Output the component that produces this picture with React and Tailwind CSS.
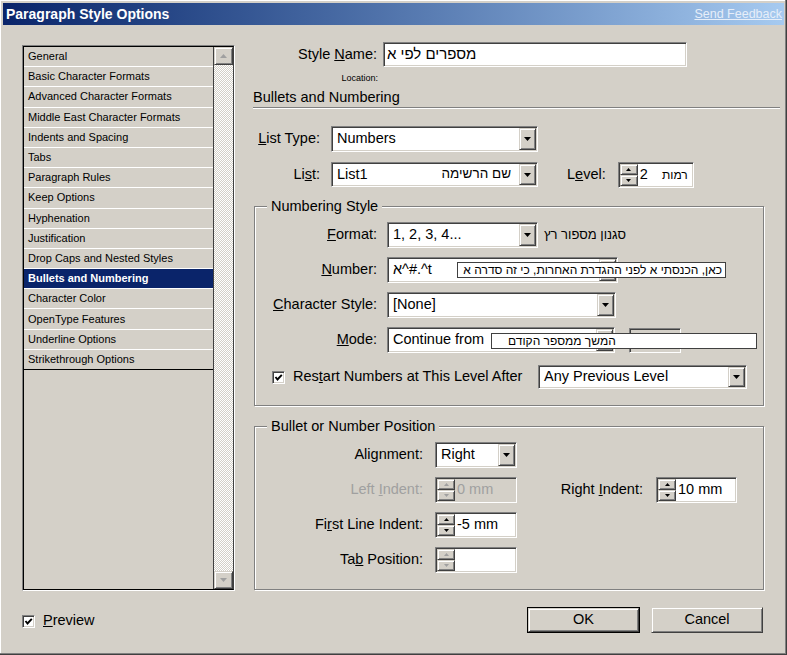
import React from "react";

const sunken =
  "border border-t-[#808080] border-l-[#808080] border-r-white border-b-white shadow-[inset_1px_1px_0_#404040,inset_-1px_-1px_0_#d4d0c8]";
const raised =
  "bg-[#d4d0c8] border border-t-[#d4d0c8] border-l-[#d4d0c8] border-r-[#404040] border-b-[#404040] shadow-[inset_1px_1px_0_#fff,inset_-1px_-1px_0_#808080]";

function DownTri({ color = "#000" }) {
  return (
    <svg width="7" height="4" viewBox="0 0 7 4">
      <polygon points="0,0 7,0 3.5,4" fill={color} />
    </svg>
  );
}

function SmallTri({ up, color }) {
  return (
    <svg width="5" height="3" viewBox="0 0 5 3">
      <polygon points={up ? "0,3 5,3 2.5,0" : "0,0 5,0 2.5,3"} fill={color} />
    </svg>
  );
}

function Dropdown({ className, children }) {
  return (
    <div className={`flex items-stretch bg-white ${sunken} ${className}`}>
      <div className="flex-1 flex items-center pl-[5px] min-w-0 whitespace-nowrap overflow-hidden">
        {children}
      </div>
      <div className={`w-[17px] my-[1px] mr-[1px] flex items-center justify-center ${raised}`}>
        <DownTri />
      </div>
    </div>
  );
}

function Spinner({ className, value, disabled, greyArrows, extra }) {
  const arrow = disabled || greyArrows ? "#a0a0a0" : "#000";
  return (
    <div
      className={`flex items-stretch ${disabled ? "bg-[#d4d0c8]" : "bg-white"} ${sunken} ${className}`}
    >
      <div className="w-[18px] my-[1px] ml-[1px] flex flex-col">
        <div className={`flex-1 flex items-center justify-center ${raised}`}>
          <SmallTri up color={arrow} />
        </div>
        <div className={`flex-1 flex items-center justify-center ${raised}`}>
          <SmallTri color={arrow} />
        </div>
      </div>
      <div
        className={`flex-1 flex items-center pl-[2px] whitespace-nowrap ${
          disabled ? "text-[#a0a0a0]" : "text-black"
        }`}
      >
        {value}
        {extra}
      </div>
    </div>
  );
}

function Checkbox() {
  return (
    <div className={`w-[13px] h-[13px] bg-white flex items-center justify-center ${sunken}`}>
      <svg width="9" height="9" viewBox="0 0 9 9">
        <polyline points="1.5,4 3.5,6.5 7.8,1.8" fill="none" stroke="#000" strokeWidth="1.9" />
      </svg>
    </div>
  );
}

const items = [
  "General",
  "Basic Character Formats",
  "Advanced Character Formats",
  "Middle East Character Formats",
  "Indents and Spacing",
  "Tabs",
  "Paragraph Rules",
  "Keep Options",
  "Hyphenation",
  "Justification",
  "Drop Caps and Nested Styles",
  "Bullets and Numbering",
  "Character Color",
  "OpenType Features",
  "Underline Options",
  "Strikethrough Options",
];

function ListBox() {
  return (
    <div className="w-[213px] h-[546px] flex border border-t-[#808080] border-l-[#808080] border-r-white border-b-white">
      <div className="flex-1 flex border border-t-black border-l-black border-b-black border-r-[#404040]">
        <div className="flex-1 flex flex-col border-r border-r-[#404040]">
          {items.map((t, i) => {
            const sel = t === "Bullets and Numbering";
            const last = i === items.length - 1;
            return (
              <div
                key={t}
                className={`h-[20.2px] shrink-0 flex items-center pl-[4px] text-[11px] leading-none whitespace-nowrap border-b ${
                  last ? "border-b-black" : "border-b-white"
                } ${sel ? "bg-[#0a246a] text-white font-bold" : "text-black"}`}
              >
                {t}
              </div>
            );
          })}
        </div>
        <div className="w-[19px] flex flex-col justify-between bg-[repeating-conic-gradient(#ffffff_0%_25%,#d4d0c8_0%_50%)] bg-[length:2px_2px]">
          <div className={`h-[18px] flex items-center justify-center ${raised}`}>
            <svg width="7" height="4" viewBox="0 0 7 4">
              <polygon points="0,4 7,4 3.5,0" fill="#a0a0a0" />
            </svg>
          </div>
          <div className={`h-[18px] flex items-center justify-center ${raised}`}>
            <DownTri color="#a0a0a0" />
          </div>
        </div>
      </div>
    </div>
  );
}

function Group({ title, className, children }) {
  return (
    <div
      className={`relative ml-[1px] w-[510px] border border-[#808080] shadow-[inset_1px_1px_0_#fff,1px_1px_0_#fff] ${className}`}
    >
      <div className="absolute -top-[9px] left-[12px] px-[4px] bg-[#d4d0c8] text-[14.5px] leading-[16px]">
        {title}
      </div>
      {children}
    </div>
  );
}

export default function App() {
  return (
    <div className="w-[787px] h-[655px] bg-[#d4d0c8] relative overflow-hidden font-['Liberation_Sans',Arial,sans-serif] text-black shadow-[inset_-1px_-1px_0_#404040,inset_-2px_-2px_0_#808080,inset_1px_1px_0_#ffffff]">
      {/* Title bar */}
      <div className="mx-[3px] mt-[3px] h-[22px] bg-linear-to-r from-[#0a246a] to-[#a6caf0] flex items-center justify-between pl-[3px] pr-[2px]">
        <span className="text-white font-bold text-[14px] leading-none">Paragraph Style Options</span>
        <span className="text-[#e6eef9] text-[12.5px] leading-none underline">Send Feedback</span>
      </div>

      {/* Body */}
      <div className="flex h-[566px]">
        <div className="pl-[22px] pt-[20px]">
          <ListBox />
        </div>

        <div className="ml-[18px] w-[527px] pt-[17px] flex flex-col text-[14.5px]">
          {/* Style name */}
          <div className="flex items-center h-[25px]">
            <div className="w-[124px] text-right whitespace-nowrap">
              Style <u>N</u>ame:
            </div>
            <div className={`ml-[6px] w-[304px] h-[25px] bg-white flex items-center pl-[3px] text-[15px] ${sunken}`}>
              מספרים לפי א
            </div>
          </div>
          <div className="mt-[6px] h-[11px] w-[125px] text-right text-[9px] leading-[11px]">Location:</div>
          <div className="mt-[5px] leading-[16px]">Bullets and Numbering</div>
          <div className="mt-[2px] h-[2px] border-t border-t-[#808080] border-b border-b-white" />

          {/* List Type */}
          <div className="mt-[17px] flex items-center h-[26px]">
            <div className="w-[67px] text-right whitespace-nowrap">
              <u>L</u>ist Type:
            </div>
            <Dropdown className="ml-[11px] w-[207px] h-[26px]">Numbers</Dropdown>
          </div>

          {/* List */}
          <div className="mt-[10px] flex items-center h-[25px]">
            <div className="w-[67px] text-right whitespace-nowrap">
              Li<u>s</u>t:
            </div>
            <Dropdown className="ml-[11px] w-[207px] h-[25px]">
              <span>List1</span>
              <span className="ml-auto mr-[8px] text-[13.5px]">שם הרשימה</span>
            </Dropdown>
            <div className="ml-[29px] whitespace-nowrap">
              L<u>e</u>vel:
            </div>
            <Spinner
              className="ml-[12px] w-[76px] h-[26px]"
              value="2"
              extra={<span className="ml-auto mr-[5px] text-[12px]">רמות</span>}
            />
          </div>

          {/* Numbering Style */}
          <Group title="Numbering Style" className="mt-[19px] h-[200px]">
            <div className="pt-[15px] flex flex-col gap-[9px]">
              <div className="flex items-center h-[26px]">
                <div className="w-[122px] text-right whitespace-nowrap">
                  <u>F</u>ormat:
                </div>
                <Dropdown className="ml-[10px] w-[151px] h-[26px]">1, 2, 3, 4...</Dropdown>
                <span className="ml-[6px] text-[13px]">סגנון מספור רץ</span>
              </div>
              <div className="relative flex items-center h-[26px]">
                <div className="w-[122px] text-right whitespace-nowrap">
                  <u>N</u>umber:
                </div>
                <Dropdown className="ml-[10px] w-[231px] h-[26px]">א^#.^t</Dropdown>
                <div className="absolute left-[202px] top-[5px] w-[269px] h-[16px] bg-white border border-[#404040] flex items-center justify-end pr-[3px] text-[12px] leading-none whitespace-nowrap">
                  <span dir="rtl">כאן, הכנסתי א לפני ההגדרת האחרות, כי זה סדרה א</span>
                </div>
              </div>
              <div className="flex items-center h-[26px]">
                <div className="w-[122px] text-right whitespace-nowrap">
                  <u>C</u>haracter Style:
                </div>
                <Dropdown className="ml-[10px] w-[229px] h-[26px]">[None]</Dropdown>
              </div>
              <div className="relative flex items-center h-[26px]">
                <div className="w-[122px] text-right whitespace-nowrap">
                  <u>M</u>ode:
                </div>
                <Dropdown className="ml-[10px] w-[228px] h-[26px]">Continue from</Dropdown>
                <div className={`ml-[14px] w-[52px] h-[25px] bg-[#d4d0c8] ${sunken}`} />
                <div className="absolute left-[236px] top-[6px] w-[266px] h-[16px] bg-white border border-[#404040] flex items-center pl-[16px] text-[12px] leading-none whitespace-nowrap">
                  <span dir="rtl">המשך ממספר הקודם</span>
                </div>
              </div>
              <div className="mt-[3px] flex items-center h-[24px]">
                <div className="ml-[17px]">
                  <Checkbox />
                </div>
                <div className="ml-[8px] w-[245px] whitespace-nowrap">
                  Res<u>t</u>art Numbers at This Level After
                </div>
                <Dropdown className="w-[209px] h-[24px]">Any Previous Level</Dropdown>
              </div>
            </div>
          </Group>

          {/* Bullet or Number Position */}
          <Group title="Bullet or Number Position" className="mt-[20px] h-[164px]">
            <div className="pt-[15px] flex flex-col gap-[9px]">
              <div className="flex items-center h-[26px]">
                <div className="w-[168px] text-right whitespace-nowrap">
                  Ali<u>g</u>nment:
                </div>
                <Dropdown className="ml-[12px] w-[82px] h-[26px]">Right</Dropdown>
              </div>
              <div className="flex items-center h-[26px]">
                <div className="w-[168px] text-right whitespace-nowrap text-[#a0a0a0]">
                  Left <u>I</u>ndent:
                </div>
                <Spinner className="ml-[12px] w-[82px] h-[26px]" value="0 mm" disabled />
                <div className="w-[126px] text-right whitespace-nowrap">
                  Right <u>I</u>ndent:
                </div>
                <Spinner className="ml-[13px] w-[81px] h-[26px]" value="10 mm" />
              </div>
              <div className="flex items-center h-[26px]">
                <div className="w-[168px] text-right whitespace-nowrap">
                  Fi<u>r</u>st Line Indent:
                </div>
                <Spinner className="ml-[12px] w-[82px] h-[26px]" value="-5 mm" />
              </div>
              <div className="flex items-center h-[26px]">
                <div className="w-[168px] text-right whitespace-nowrap">
                  Ta<u>b</u> Position:
                </div>
                <Spinner className="ml-[12px] w-[82px] h-[26px]" value="" greyArrows />
              </div>
            </div>
          </Group>
        </div>
      </div>

      {/* Bottom */}
      <div className="mt-[16px] h-[26px] flex items-center text-[14.5px]">
        <div className="ml-[22px] mt-[2px]">
          <Checkbox />
        </div>
        <div className="ml-[8px] mt-[2px]">
          <u>P</u>review
        </div>
        <div className="ml-auto w-[113px] h-[26px] border border-black flex">
          <div className={`flex-1 flex items-center justify-center ${raised}`}>OK</div>
        </div>
        <div className={`ml-[11px] mr-[24px] w-[112px] h-[26px] flex items-center justify-center ${raised}`}>
          Cancel
        </div>
      </div>
    </div>
  );
}
